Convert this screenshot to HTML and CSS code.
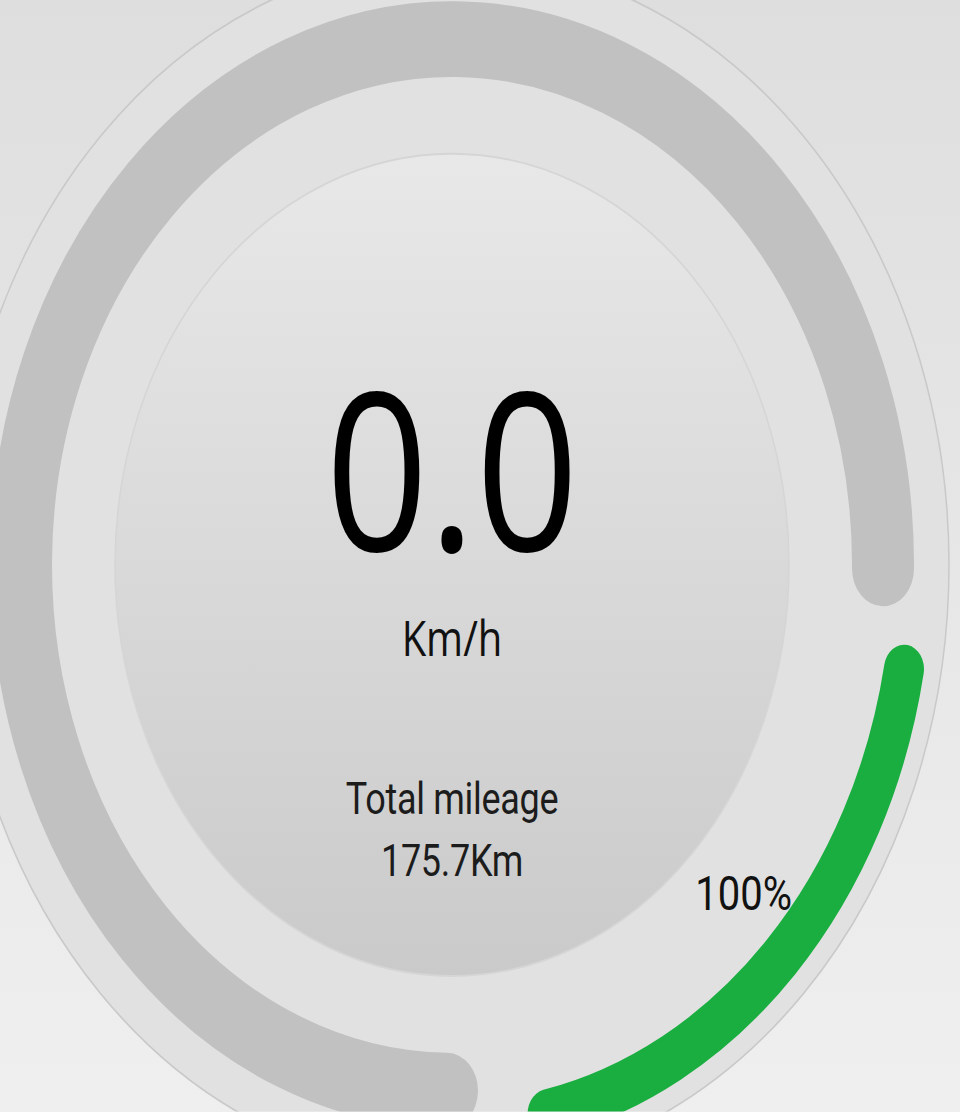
FILE: index.html
```html
<!DOCTYPE html>
<html lang="en">
<head>
  <meta charset="UTF-8" />
  <meta name="viewport" content="width=device-width, initial-scale=1.0"/>
  <title>Speedometer</title>
  <link rel="stylesheet" href="styles.css">
</head>
<body>
  <div class="stage">
    <svg class="dial" width="960" height="911" viewBox="0 0 960 911">
      <defs>
        <linearGradient id="face" x1="0" y1="0" x2="0" y2="1">
          <stop offset="0" stop-color="#e8e8e8"/>
          <stop offset="1" stop-color="#cacaca"/>
        </linearGradient>
      </defs>
      <!-- outer rim -->
      <circle class="rim" cx="452" cy="463" r="497"/>
      <!-- speed track, 270 degrees from bottom round to the right -->
      <path class="track" d="M 447 894 A 431 431 0 1 1 883 466"/>
      <!-- battery arc in the last quadrant -->
      <path class="charge" d="M 904 548.4 A 460 460 0 0 1 547.6 912.9"/>
      <circle class="face" cx="452" cy="463" r="337"/>
      <text class="charge-label" x="792" y="746" text-anchor="end">100%</text>
    </svg>

    <div class="readout">
      <div class="speed">0.0</div>
      <div class="unit">Km/h</div>
      <div class="mileage">
        <span>Total mileage</span>
        <span>175.7Km</span>
      </div>
    </div>
  </div>
</body>
</html>
```

FILE: styles.css
```css
html {
  height: 1112px;
  background: linear-gradient(#dedede, #efefef);
}
body {
  margin: 0;
  height: 1112px;
  overflow: hidden;
}
.stage {
  position: relative;
  width: 960px;
  height: 911px;
  transform: scaleY(1.22);
  transform-origin: top left;
}
.dial {
  display: block;
}
.rim {
  fill: #e1e1e1;
  stroke: #c9c9c9;
  stroke-width: 1.5;
}
.track {
  fill: none;
  stroke: #c1c1c1;
  stroke-width: 62;
  stroke-linecap: round;
}
.charge {
  fill: none;
  stroke: #1aae40;
  stroke-width: 40;
  stroke-linecap: round;
}
.face {
  fill: url(#face);
  stroke: #d5d5d5;
  stroke-width: 1.5;
}
.charge-label {
  font-family: Roboto, "Liberation Sans", sans-serif;
  font-size: 40px;
  fill: #111;
}
.readout {
  position: absolute;
  top: 0;
  left: 0;
  width: 904px;
  padding-top: 293px;
  display: flex;
  flex-direction: column;
  align-items: center;
  color: #000;
}
.speed {
  font-family: "Open Sans", "Noto Sans", sans-serif;
  font-size: 180px;
  line-height: 180px;
}
.unit {
  margin-top: 30px;
  font-family: "Open Sans", "Noto Sans", sans-serif;
  font-size: 40px;
  line-height: 40px;
  color: #111;
}
.mileage {
  margin-top: 87px;
  display: flex;
  flex-direction: column;
  align-items: center;
  font-family: Roboto, "Liberation Sans", sans-serif;
  font-size: 36px;
  line-height: 51px;
  letter-spacing: -0.3px;
  color: #1c1c1c;
}
```
